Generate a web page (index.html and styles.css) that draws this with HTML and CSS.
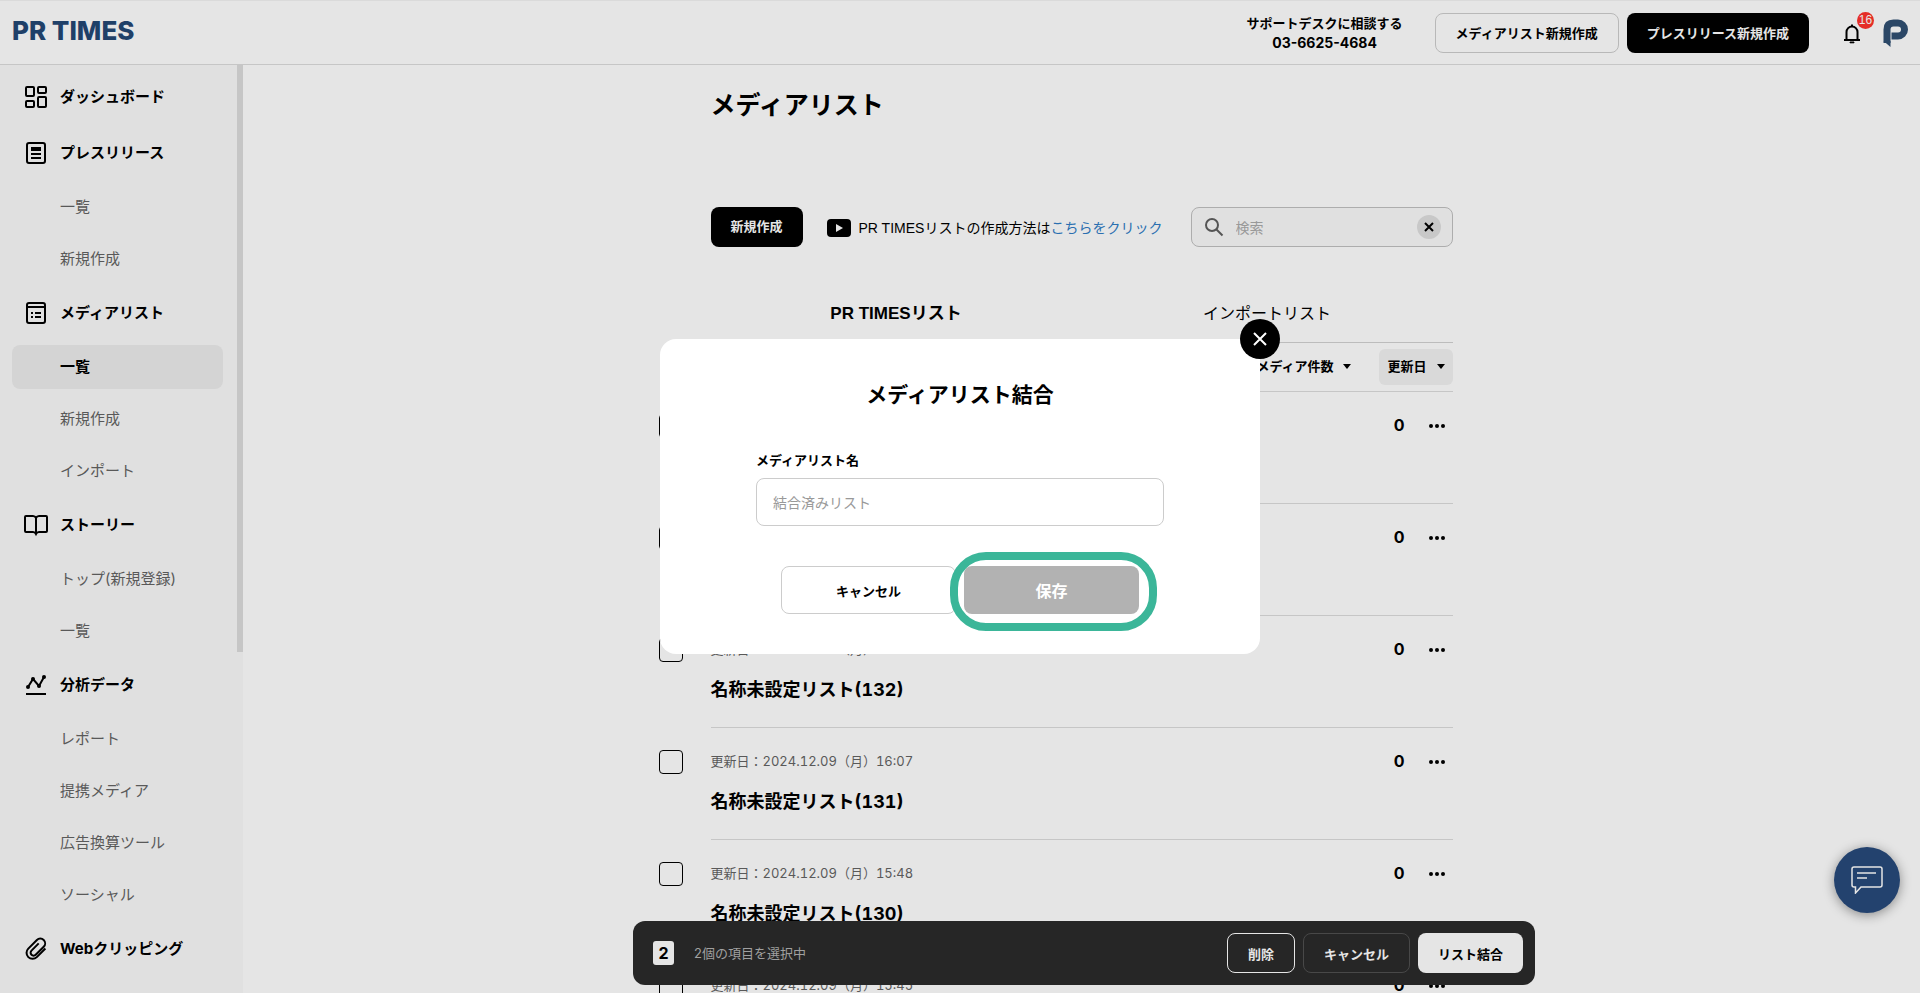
FILE: index.html
```html
<!DOCTYPE html>
<html lang="ja">
<head>
<meta charset="utf-8">
<title>メディアリスト | PR TIMES</title>
<link rel="stylesheet" href="styles.css">
</head>
<body>
<header class="header">
  <a class="logo" href="#">PR TIMES</a>
  <div class="header-tools">
    <p class="support">サポートデスクに相談する<br><span class="support-phone">03-6625-4684</span></p>
    <div class="header-buttons">
      <button class="btn btn-outline" type="button">メディアリスト新規作成</button>
      <button class="btn btn-black" type="button">プレスリリース新規作成</button>
    </div>
    <div class="header-icons">
      <button class="bell" type="button" aria-label="お知らせ">
        <svg width="24" height="24" viewBox="0 0 24 24" fill="none" stroke="#000" stroke-width="2"><path d="M4 19h16M6.500 19v-8a5.500 5.500 0 0 1 11 0v8M12 5.500V3.500"/><path d="M10 21h4v.8h-4z" fill="#000" stroke-width="1"/></svg>
        <span class="bell-badge">16</span>
      </button>
      <a class="account" href="#" aria-label="アカウント">
        <svg width="25" height="28" viewBox="0 0 25 28" fill="none"><path d="M4 24V10.500Q4 4 10.500 4h4.500a6 6 0 0 1 0 13H8.500" stroke="#2b4766" stroke-width="7"/><path d="M.5 22h7v6z" fill="#2b4766"/></svg>
      </a>
    </div>
  </div>
</header>
<div class="body">
  <nav class="sidebar">
    <a class="nav-main" href="#"><svg class="nav-icon" viewBox="0 0 24 24"><rect x="2" y="2" width="8" height="9" rx="1"/><rect x="14" y="2" width="8" height="6" rx="1"/><rect x="2" y="16" width="8" height="6" rx="1"/><rect x="14" y="12" width="8" height="10" rx="1"/></svg>ダッシュボード</a>
    <a class="nav-main" href="#"><svg class="nav-icon" viewBox="0 0 24 24"><rect x="3" y="2" width="18" height="20" rx="2"/><path d="M7 8h10" stroke-width="4"/><path d="M7 13h10M7 17h10"/></svg>プレスリリース</a>
    <a class="nav-sub" href="#">一覧</a>
    <a class="nav-sub" href="#">新規作成</a>
    <a class="nav-main" href="#"><svg class="nav-icon" viewBox="0 0 24 24"><rect x="3" y="2" width="18" height="20" rx="2"/><path d="M3 6h18M7 12h2M11 12h6M7 16h2M11 16h6"/></svg>メディアリスト</a>
    <a class="nav-sub nav-active" href="#" aria-current="page">一覧</a>
    <a class="nav-sub" href="#">新規作成</a>
    <a class="nav-sub" href="#">インポート</a>
    <a class="nav-main" href="#"><svg class="nav-icon" viewBox="0 0 24 24"><path d="M12 5q-1-2-3-2H2q-1 0-1 1v14q0 1 1 1h7q2 0 3 2 1-2 3-2h7q1 0 1-1V4q0-1-1-1h-7q-2 0-3 2zV21"/></svg>ストーリー</a>
    <a class="nav-sub" href="#">トップ(新規登録)</a>
    <a class="nav-sub" href="#">一覧</a>
    <a class="nav-main" href="#"><svg class="nav-icon" viewBox="0 0 24 24"><path d="M4 14l5-8 6 7 5-9M2 21h20"/><g fill="#000" stroke="none"><circle cx="4" cy="14" r="2"/><circle cx="9" cy="6" r="2"/><circle cx="15" cy="13" r="2"/><circle cx="20" cy="4" r="2"/></g></svg>分析データ</a>
    <a class="nav-sub" href="#">レポート</a>
    <a class="nav-sub" href="#">提携メディア</a>
    <a class="nav-sub" href="#">広告換算ツール</a>
    <a class="nav-sub" href="#">ソーシャル</a>
    <a class="nav-main" href="#"><svg class="nav-icon" viewBox="0 0 24 24"><path d="M21.400 11.500l-8.600 8.600a6 6 0 0 1-8.500-8.500l8.600-8.600a4.800 4.800 0 0 1 6.800 6.800l-8 8a2.900 2.900 0 0 1-4.200-4.200l7.200-7.200"/></svg>Webクリッピング</a>
    <div class="scrollbar"></div>
  </nav>
  <main class="main">
    <div class="content">
      <h1 class="page-title">メディアリスト</h1>
      <div class="toolbar">
        <button class="btn btn-black btn-new" type="button">新規作成</button>
        <p class="howto"><svg width="24" height="18" viewBox="0 0 24 18"><rect width="24" height="18" rx="4"/><path d="M9 5l7 4-7 4z" fill="#e5e5e5"/></svg><span>PR TIMESリストの作成方法は<a href="#">こちらをクリック</a></span></p>
        <div class="search">
          <svg width="20" height="20" viewBox="0 0 20 20" fill="none" stroke="#555" stroke-width="2"><circle cx="8" cy="8" r="6"/><path d="M12.500 12.500l6 6"/></svg>
          <input type="text" placeholder="検索" aria-label="検索">
          <button class="search-clear" type="button" aria-label="クリア"><svg width="10" height="10" viewBox="0 0 10 10" stroke="#000" stroke-width="2"><path d="M1 1l8 8M9 1l-8 8"/></svg></button>
        </div>
      </div>
      <div class="tabs" role="tablist">
        <button class="tab tab-active" type="button" role="tab" aria-selected="true">PR TIMESリスト</button>
        <button class="tab" type="button" role="tab" aria-selected="false">インポートリスト</button>
      </div>
      <div class="sort">
        <button class="sort-btn" type="button">メディア件数<span class="caret"></span></button>
        <button class="sort-btn sort-active" type="button">更新日<span class="caret"></span></button>
      </div>
      <ul class="rows">
        <li class="row">
          <input class="check" type="checkbox" aria-label="名称未設定リスト(134)">
          <div class="row-text"><p class="date">更新日：2024.12.09（月）16:12</p><h2 class="row-title">名称未設定リスト(134)</h2></div>
          <span class="count">0</span>
          <button class="more" type="button" aria-label="メニュー"><i></i><i></i><i></i></button>
        </li>
        <li class="row">
          <input class="check" type="checkbox" aria-label="名称未設定リスト(133)">
          <div class="row-text"><p class="date">更新日：2024.12.09（月）16:10</p><h2 class="row-title">名称未設定リスト(133)</h2></div>
          <span class="count">0</span>
          <button class="more" type="button" aria-label="メニュー"><i></i><i></i><i></i></button>
        </li>
        <li class="row">
          <input class="check" type="checkbox" aria-label="名称未設定リスト(132)">
          <div class="row-text"><p class="date">更新日：2024.12.09（月）16:08</p><h2 class="row-title">名称未設定リスト(132)</h2></div>
          <span class="count">0</span>
          <button class="more" type="button" aria-label="メニュー"><i></i><i></i><i></i></button>
        </li>
        <li class="row">
          <input class="check" type="checkbox" aria-label="名称未設定リスト(131)">
          <div class="row-text"><p class="date">更新日：2024.12.09（月）16:07</p><h2 class="row-title">名称未設定リスト(131)</h2></div>
          <span class="count">0</span>
          <button class="more" type="button" aria-label="メニュー"><i></i><i></i><i></i></button>
        </li>
        <li class="row">
          <input class="check" type="checkbox" aria-label="名称未設定リスト(130)">
          <div class="row-text"><p class="date">更新日：2024.12.09（月）15:48</p><h2 class="row-title">名称未設定リスト(130)</h2></div>
          <span class="count">0</span>
          <button class="more" type="button" aria-label="メニュー"><i></i><i></i><i></i></button>
        </li>
        <li class="row">
          <input class="check" type="checkbox" aria-label="名称未設定リスト(129)">
          <div class="row-text"><p class="date">更新日：2024.12.09（月）15:45</p><h2 class="row-title">名称未設定リスト(129)</h2></div>
          <span class="count">0</span>
          <button class="more" type="button" aria-label="メニュー"><i></i><i></i><i></i></button>
        </li>
      </ul>
    </div>
    <div class="action-wrap">
      <div class="action-bar">
        <span class="selected-count">2</span>
        <span class="selected-text">2個の項目を選択中</span>
        <div class="action-buttons">
          <button class="btn btn-delete" type="button">削除</button>
          <button class="btn btn-dark" type="button">キャンセル</button>
          <button class="btn btn-light" type="button">リスト結合</button>
        </div>
      </div>
    </div>
  </main>
</div>
<button class="chat" type="button" aria-label="チャット">
  <svg width="32" height="28" viewBox="0 0 32 28" fill="none" stroke="#e5e5e5" stroke-width="1.500"><path d="M4.500 21H3q-2 0-2-2V3q0-2 2-2h26q2 0 2 2v16q0 2-2 2H10l-5.500 6z"/><path d="M6 7h19M6 12h10"/></svg>
</button>
<div class="modal-layer">
  <form class="modal" role="dialog" aria-labelledby="merge-title">
    <button class="modal-close" type="button" aria-label="閉じる"><svg width="14" height="14" viewBox="0 0 14 14" stroke="#fff" stroke-width="2"><path d="M1 1l12 12M13 1L1 13"/></svg></button>
    <h2 class="modal-title" id="merge-title">メディアリスト結合</h2>
    <label class="field-label" for="list-name">メディアリスト名</label>
    <input class="field" id="list-name" type="text" placeholder="結合済みリスト">
    <div class="modal-buttons">
      <button class="btn btn-cancel" type="button">キャンセル</button>
      <div class="save-wrap">
        <button class="btn btn-save" type="submit" disabled>保存</button>
        <span class="highlight"></span>
      </div>
    </div>
  </form>
</div>
</body>
</html>
```
FILE: styles.css
```css
* { box-sizing: border-box; }
body, p, h1, h2, ul { margin: 0; padding: 0; }
body {
  height: 100vh;
  overflow: hidden;
  display: flex;
  flex-direction: column;
  background: #e5e5e5;
  color: #000;
  font-family: Inter, "Noto Sans CJK JP", sans-serif;
  font-size: 14px;
  line-height: 20px;
}
button, input { font-family: inherit; color: inherit; padding: 0; margin: 0; }
button { border: 0; background: none; }
a { text-decoration: none; color: inherit; }

.btn {
  height: 40px;
  padding: 0 20px;
  border-radius: 8px;
  font-size: 13px;
  font-weight: 700;
  white-space: nowrap;
}
.btn-outline { border: 1px solid #b8b8b8; }
.btn-black { background: #000; color: #e5e5e5; }
.btn-new { padding-bottom: 3px; }

/* Header */
.header {
  flex: none;
  height: 65px;
  padding: 0 12px;
  display: flex;
  justify-content: space-between;
  align-items: center;
  border-top: 1px solid #dadada;
  border-bottom: 1px solid #c6c6c6;
}
.logo {
  color: #1f4068;
  font-size: 26px;
  line-height: 32px;
  font-weight: 800;
  padding-bottom: 4px;
}
.header-tools { display: flex; align-items: center; }
.support {
  font-size: 13px;
  font-weight: 700;
  text-align: center;
  margin-right: 32px;
}
.support-phone { font-size: 14px; }
.header-buttons { display: flex; gap: 8px; margin-right: 31px; }
.header-icons { display: flex; align-items: center; gap: 19px; }
.bell { position: relative; width: 24px; height: 24px; }
.bell-badge {
  position: absolute;
  top: -9px;
  right: -10px;
  width: 17px;
  height: 17px;
  border-radius: 50%;
  background: #e52d27;
  color: #e5e5e5;
  font-family: "Liberation Sans", sans-serif;
  font-size: 12px;
  line-height: 17px;
}
.account { height: 28px; }

/* Sidebar */
.body { flex: 1; min-height: 0; display: flex; }
.sidebar {
  position: relative;
  flex: none;
  width: 243px;
  padding: 8px 20px 8px 12px;
  display: flex;
  flex-direction: column;
  gap: 8px;
  overflow: hidden;
  background: #e0e0e0;
  font-size: 15px;
}
.nav-main {
  flex: none;
  height: 48px;
  padding-left: 12px;
  display: flex;
  align-items: center;
  gap: 12px;
  font-weight: 700;
}
.nav-icon { width: 24px; height: 24px; fill: none; stroke: #000; stroke-width: 2; }
.nav-sub {
  flex: none;
  height: 44px;
  padding-left: 48px;
  display: flex;
  align-items: center;
  border-radius: 8px;
  color: #595959;
}
.nav-active { background: #d4d4d4; color: #000; font-weight: 700; }
.scrollbar {
  position: absolute;
  top: 0;
  right: 0;
  width: 6px;
  height: 587px;
  background: #c6c6c6;
}

/* Main column */
.main { flex: 1; min-width: 0; overflow: hidden; }
.content { width: 742px; margin: 0 auto; padding-top: 22px; }
.page-title { font-size: 25px; line-height: 36px; }
.toolbar { display: flex; align-items: center; margin-top: 84px; }
.howto {
  flex: 1;
  display: flex;
  align-items: center;
  gap: 8px;
  margin-left: 24px;
  padding-top: 2px;
  font-family: "Liberation Sans", "Noto Sans CJK JP", sans-serif;
}
.howto a { color: #2a6fb0; }
.search {
  width: 262px;
  height: 40px;
  padding: 0 11px 0 12px;
  display: flex;
  align-items: center;
  border: 1px solid #adadad;
  border-radius: 8px;
  background: #e0e0e0;
}
.search input {
  flex: 1;
  min-width: 0;
  margin-left: 12px;
  border: 0;
  background: none;
  font-size: 14px;
}
.search input::placeholder, .field::placeholder { color: #999; opacity: 1; }
.search-clear {
  width: 24px;
  height: 24px;
  display: flex;
  align-items: center;
  justify-content: center;
  border-radius: 50%;
  background: #c8c8c8;
}
.tabs { display: flex; margin-top: 38px; border-bottom: 1px solid #bcbcbc; }
.tab {
  flex: 1;
  height: 57px;
  padding-bottom: 4px;
  font-family: "Liberation Sans", "Noto Sans CJK JP", sans-serif;
  font-size: 16px;
}
.tab-active { font-size: 17px; font-weight: 700; }
.sort {
  display: flex;
  justify-content: flex-end;
  gap: 20px;
  padding: 6px 0;
  border-bottom: 1px solid #c6c6c6;
}
.sort-btn {
  height: 36px;
  padding: 0 8px 3px;
  display: flex;
  align-items: center;
  gap: 10px;
  border-radius: 6px;
  font-size: 13px;
  font-weight: 700;
}
.sort-active { background: #d9d9d9; }
.caret { margin-top: 2px; border: 4px solid transparent; border-top: 5px solid #000; border-bottom: 0; }

.rows { list-style: none; margin-left: -52px; }
.row { display: flex; height: 112px; }
.check {
  appearance: none;
  width: 24px;
  height: 24px;
  margin: 22px 28px 0 0;
  border: 1px solid #000;
  border-radius: 4px;
}
.row-text {
  flex: 1;
  padding-top: 23px;
  border-bottom: 1px solid #c6c6c6;
  font-variant-numeric: tabular-nums;
}
.date { font-size: 13px; color: #595959; }
.row-title { margin-top: 18px; font-size: 18px; line-height: 26px; }
.count {
  padding-top: 23px;
  border-bottom: 1px solid #c6c6c6;
  font-size: 16px;
  font-weight: 700;
}
.more {
  display: flex;
  align-items: flex-start;
  gap: 2px;
  padding: 32px 8px 0 24px;
  border-bottom: 1px solid #c6c6c6;
}
.more i { width: 4px; height: 4px; border-radius: 50%; background: #000; }

/* Selection bar */
.action-wrap {
  position: fixed;
  left: 243px;
  right: 0;
  bottom: 8px;
  padding-left: 5px;
  display: flex;
  justify-content: center;
}
.action-bar {
  width: 902px;
  padding: 12px;
  display: flex;
  align-items: center;
  border-radius: 12px;
  background: #262626;
}
.selected-count {
  margin-left: 8px;
  width: 21px;
  border-radius: 3px;
  background: #e5e5e5;
  text-align: center;
  font-size: 16px;
  line-height: 24px;
  font-weight: 700;
}
.selected-text { margin-left: 20px; font-size: 13px; color: #a0a0a0; }
.action-buttons { margin-left: auto; display: flex; gap: 8px; }
.btn-delete { border: 1px solid #e5e5e5; color: #e5e5e5; }
.btn-dark { border: 1px solid #484848; color: #e5e5e5; }
.btn-light { background: #e5e5e5; }

.chat {
  position: fixed;
  right: 20px;
  bottom: 80px;
  width: 66px;
  height: 66px;
  display: flex;
  align-items: center;
  justify-content: center;
  border-radius: 50%;
  background: #23426e;
  box-shadow: 0 2px 12px rgba(0, 0, 0, .4);
}

/* Merge dialog */
.modal-layer {
  position: fixed;
  inset: 0;
  display: flex;
  align-items: center;
  justify-content: center;
}
.modal {
  position: relative;
  width: 600px;
  padding: 41px 96px 40px;
  display: flex;
  flex-direction: column;
  border-radius: 16px;
  background: #fff;
}
.modal-close {
  position: absolute;
  top: -20px;
  right: -20px;
  width: 40px;
  height: 40px;
  display: flex;
  align-items: center;
  justify-content: center;
  border-radius: 50%;
  background: #000;
}
.modal-title { font-size: 21px; line-height: 30px; text-align: center; }
.field-label { margin-top: 40px; font-size: 13px; font-weight: 700; }
.field {
  height: 48px;
  margin-top: 8px;
  padding: 0 16px;
  border: 1px solid #ccc;
  border-radius: 8px;
  font-size: 14px;
}
.modal-buttons { display: flex; justify-content: center; gap: 8px; margin-top: 40px; }
.btn-cancel, .btn-save { width: 175px; height: 48px; }
.btn-cancel { border: 1px solid #ccc; background: #fff; }
.btn-save { background: #b2b2b2; color: #fff; font-size: 16px; }
.save-wrap { position: relative; }
.highlight {
  position: absolute;
  inset: -14px -18px -17px -14px;
  border: 8px solid #3bb699;
  border-radius: 36px;
  pointer-events: none;
}
```
